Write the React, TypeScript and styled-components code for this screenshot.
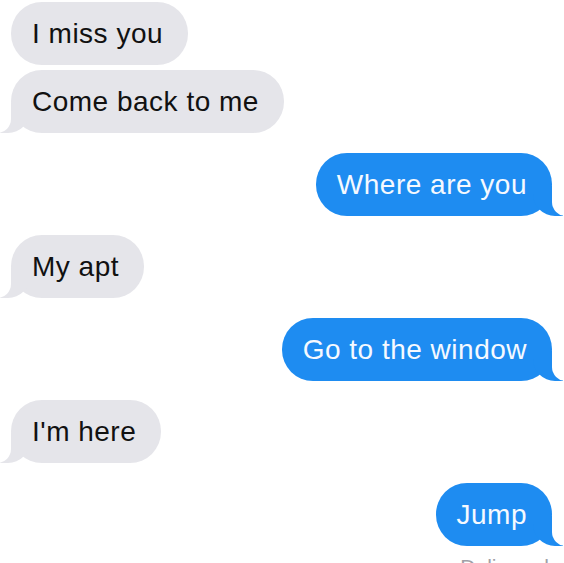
import React from "react";
import styled, { createGlobalStyle, css } from "styled-components";

const GlobalStyle = createGlobalStyle`
  html, body {
    margin: 0;
    padding: 0;
    background: #ffffff;
    overflow: hidden;
  }
  body {
    font-family: "Liberation Sans", Arial, Helvetica, sans-serif;
  }
`;

const Thread = styled.div`
  width: 564px;
  height: 563px;
  box-sizing: border-box;
  padding: 2px 0 0;
  display: flex;
  flex-direction: column;
  overflow: hidden;
  background: #ffffff;
`;

const Row = styled.div<{ $mine: boolean; $spaced: boolean }>`
  display: flex;
  justify-content: ${(p) => (p.$mine ? "flex-end" : "flex-start")};
  padding: ${(p) => (p.$mine ? "0 12px 0 0" : "0 0 0 11px")};
  margin-top: ${(p) => (p.$spaced ? "19.5px" : "5px")};
  &:first-child {
    margin-top: 0;
  }
`;

const tailThem = css`
  &::before {
    content: "";
    position: absolute;
    z-index: -1;
    bottom: 0;
    left: -11px;
    width: 30px;
    height: 30px;
    background: #e5e5ea;
    border-bottom-right-radius: 22px;
  }
  &::after {
    content: "";
    position: absolute;
    z-index: -1;
    bottom: 0;
    left: -30px;
    width: 30px;
    height: 30px;
    background: #ffffff;
    border-bottom-right-radius: 14px;
  }
`;

const tailMe = css`
  &::before {
    content: "";
    position: absolute;
    z-index: -1;
    bottom: 0;
    right: -11px;
    width: 30px;
    height: 30px;
    background: #1e8cf1;
    border-bottom-left-radius: 22px;
  }
  &::after {
    content: "";
    position: absolute;
    z-index: -1;
    bottom: 0;
    right: -30px;
    width: 30px;
    height: 30px;
    background: #ffffff;
    border-bottom-left-radius: 14px;
  }
`;

const Bubble = styled.div<{ $mine: boolean; $tail: boolean }>`
  position: relative;
  z-index: 0;
  box-sizing: border-box;
  height: 63px;
  padding: 15px 25px 15px 21px;
  border-radius: 31px;
  font-size: 28px;
  line-height: 33px;
  letter-spacing: 0.5px;
  white-space: nowrap;
  background: ${(p) => (p.$mine ? "#1e8cf1" : "#e5e5ea")};
  color: ${(p) => (p.$mine ? "#f5f9ff" : "#111111")};
  ${(p) => (p.$tail ? (p.$mine ? tailMe : tailThem) : "")}
`;

const Status = styled.div`
  align-self: flex-end;
  margin: 9px 15px 0 0;
  font-size: 21px;
  line-height: 24px;
  color: #a0a0a6;
`;

type Msg = { text: string; mine: boolean };

const messages: Msg[] = [
  { text: "I miss you", mine: false },
  { text: "Come back to me", mine: false },
  { text: "Where are you", mine: true },
  { text: "My apt", mine: false },
  { text: "Go to the window", mine: true },
  { text: "I'm here", mine: false },
  { text: "Jump", mine: true },
];

export default function App() {
  return (
    <>
      <GlobalStyle />
      <Thread>
        {messages.map((m, i) => {
          const prev = messages[i - 1];
          const next = messages[i + 1];
          const spaced = !!prev && prev.mine !== m.mine;
          const tail = !next || next.mine !== m.mine;
          return (
            <Row key={i} $mine={m.mine} $spaced={spaced}>
              <Bubble $mine={m.mine} $tail={tail}>
                {m.text}
              </Bubble>
            </Row>
          );
        })}
        <Status>Delivered</Status>
      </Thread>
    </>
  );
}
